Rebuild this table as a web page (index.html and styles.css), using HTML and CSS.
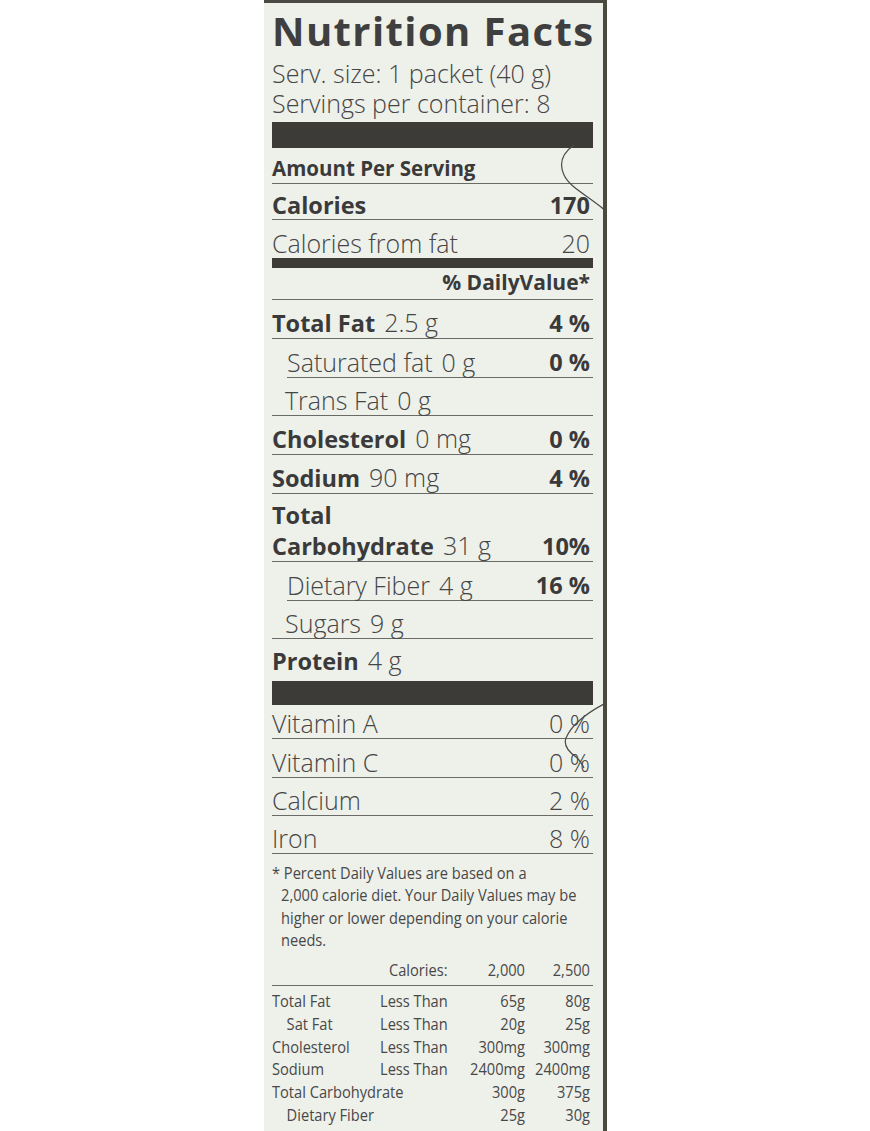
FILE: index.html
```html
<!DOCTYPE html>
<html lang="en">
<head>
<meta charset="utf-8">
<title>Nutrition Facts</title>
<link rel="stylesheet" href="styles.css">
</head>
<body>
<div class="page">
  <section class="label">
    <h1 class="title">Nutrition Facts</h1>
    <p class="serv">Serv. size: 1 packet (40 g)</p>
    <p class="serv">Servings per container: 8</p>
    <div class="bar bar-lg"></div>

    <div class="row h36"><b class="b20">Amount Per Serving</b></div>
    <div class="row h36 cal"><b>Calories</b><b>170</b></div>
    <div class="row h38 noline"><span>Calories from fat</span><span>20</span></div>
    <div class="bar bar-md"></div>
    <div class="row h32 right"><b class="b21">% DailyValue*</b></div>

    <div class="row h39"><span><b>Total Fat</b><span class="amt">2.5 g</span></span><b>4 %</b></div>
    <div class="row h39 sub"><span>Saturated fat<span class="amt">0 g</span></span><b>0 %</b></div>
    <div class="row h38 subtext"><span>Trans Fat<span class="amt">0 g</span></span></div>
    <div class="row h39"><span><b>Cholesterol</b><span class="amt">0 mg</span></span><b>0 %</b></div>
    <div class="row h39"><span><b>Sodium</b><span class="amt">90 mg</span></span><b>4 %</b></div>
    <div class="row h68 carb"><span class="two"><b>Total</b><span><b>Carbohydrate</b><span class="amt">31 g</span></span></span><b>10%</b></div>
    <div class="row h39 sub"><span>Dietary Fiber<span class="amt">4 g</span></span><b>16 %</b></div>
    <div class="row h38 subtext"><span>Sugars<span class="amt">9 g</span></span></div>
    <div class="row h42 noline"><span><b>Protein</b><span class="amt">4 g</span></span></div>
    <div class="bar bar-sm"></div>

    <div class="row h34"><span>Vitamin A</span><span>0 %</span></div>
    <div class="row h39"><span>Vitamin C</span><span>0 %</span></div>
    <div class="row h38"><span>Calcium</span><span>2 %</span></div>
    <div class="row h38"><span>Iron</span><span>8 %</span></div>

    <div class="foot">
      <div class="cond">
        <p class="note">* Percent Daily Values are based on a<br>2,000 calorie diet. Your Daily Values may be<br>higher or lower depending on your calorie<br>needs.</p>
        <div class="dvtable head">
          <span></span><span class="clabel">Calories:</span><span class="num">2,000</span><span class="num">2,500</span>
        </div>
      </div>
    </div>
    <div class="cond">
      <div class="dvtable body">
        <span>Total Fat</span><span>Less Than</span><span class="num">65g</span><span class="num">80g</span>
        <span class="ind">Sat Fat</span><span>Less Than</span><span class="num">20g</span><span class="num">25g</span>
        <span>Cholesterol</span><span>Less Than</span><span class="num">300mg</span><span class="num">300mg</span>
        <span>Sodium</span><span>Less Than</span><span class="num">2400mg</span><span class="num">2400mg</span>
        <span class="span2">Total Carbohydrate</span><span class="num">300g</span><span class="num">375g</span>
        <span class="ind span2">Dietary Fiber</span><span class="num">25g</span><span class="num">30g</span>
      </div>
    </div>

    <svg class="hair" width="343" height="1131" viewBox="0 0 343 1131" aria-hidden="true">
      <path d="M310 145 C 300 152, 294 162, 300 175 C 306 188, 325 196, 343 212" />
      <path d="M340 704 C 325 712, 308 724, 302 738 C 299 746, 305 752, 312 757 C 316 760, 318 764, 320 768" />
    </svg>
  </section>
</div>
</body>
</html>
```

FILE: styles.css
```css
* { box-sizing: border-box; }

html, body {
  margin: 0;
  padding: 0;
  background: #ffffff;
}

.page {
  padding-left: 264px;
}

.label {
  position: relative;
  width: 343px;
  height: 1131px;
  overflow: hidden;
  background: #eef0ea;
  border-top: 3px solid #4a4a42;
  border-right: 4px solid #4b4a3f;
  padding: 0 10px 0 8px;
  color: #454545;
  font-family: "Open Sans", "DejaVu Sans", sans-serif;
  font-weight: 300;
}

.title {
  margin: 0;
  height: 55px;
  line-height: 55px;
  font-size: 40px;
  font-weight: 700;
  letter-spacing: 1.4px;
  color: #3f3f3f;
  white-space: nowrap;
}

.serv {
  margin: 0;
  height: 30px;
  line-height: 30px;
  font-size: 25px;
  font-weight: 300;
  white-space: nowrap;
}

.bar {
  background: #3c3b37;
}
.bar-lg { height: 26px; margin-top: 4px; }
.bar-md { height: 10px; }
.bar-sm { height: 24px; }

.row {
  display: flex;
  justify-content: space-between;
  align-items: flex-end;
  border-bottom: 1px solid #6a6a66;
  padding-bottom: 5px;
  font-size: 25px;
  line-height: 20px;
  white-space: nowrap;
  padding-right: 3px;
}
.row b {
  font-size: 23.5px;
  font-weight: 700;
  color: #3a3a3a;
}
.row.noline { border-bottom: none; }
.row.right { justify-content: flex-end; padding-bottom: 7px; }
.row.sub { margin-left: 15px; }
.row.subtext { padding-left: 13px; }

.h32 { height: 32px; }
.h34 { height: 34px; }
.h36 { height: 36px; }
.h38 { height: 38px; }
.h39 { height: 39px; }
.h42 { height: 42px; padding-bottom: 10px; }
.h68 { height: 68px; }

.row b.b20 { font-size: 20.5px; }
.row b.b21 { font-size: 21px; }

.cal { padding-bottom: 4px; }

.amt {
  margin-left: 9px;
}

.two {
  display: flex;
  flex-direction: column;
  gap: 10px;
}

.foot {
  height: 132px;
  border-bottom: 1px solid #6a6a66;
  padding-top: 8px;
}

/* condensed type: the label face is a narrow humanist sans */
.cond {
  width: calc(321px / 0.86);
  transform: scaleX(0.86);
  transform-origin: 0 0;
}

.note {
  margin: 0;
  padding-left: 10.5px;
  text-indent: -10.5px;
  font-weight: 400;
  font-size: 17px;
  line-height: 22.3px;
  color: #484848;
  white-space: nowrap;
}

.dvtable {
  display: grid;
  grid-template-columns: 125.6px 1fr 87px 75.6px;
  padding-right: 3.5px;
  font-weight: 400;
  font-size: 17px;
  line-height: 22.8px;
  color: #484848;
  white-space: nowrap;
}
.dvtable.head { margin-top: 8px; }
.dvtable.body { padding-top: 4px; }
.dvtable .num { text-align: right; }
.dvtable .clabel { padding-left: 10.5px; }
.dvtable .ind { padding-left: 17px; }
.dvtable .span2 { grid-column: span 2; }

.hair {
  position: absolute;
  top: -3px;
  left: 0;
  pointer-events: none;
}
.hair path {
  fill: none;
  stroke: #4a4a4a;
  stroke-width: 1.2;
}
```
